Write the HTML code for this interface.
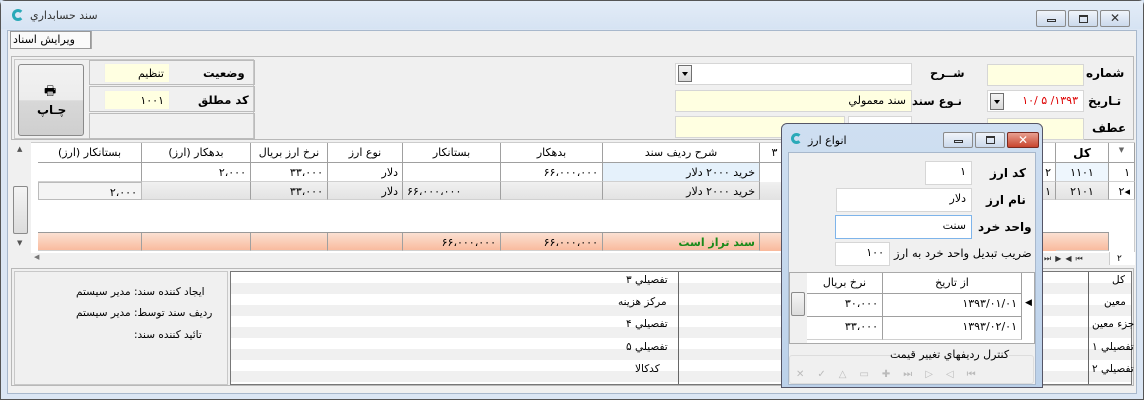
<!DOCTYPE html>
<html><head><meta charset="utf-8">
<style>
*{box-sizing:border-box;margin:0;padding:0}
body{width:1144px;height:400px;overflow:hidden;background:#cfdcec;font-family:"DejaVu Sans","Liberation Sans",sans-serif;font-size:11px;color:#000;position:relative}
.a{position:absolute}
.t{position:absolute;white-space:nowrap;direction:rtl}
.b{font-weight:bold}
.fld{position:absolute;background:#fff;border:1px solid #d6d6d6;direction:rtl;text-align:right;padding:3px 5px;white-space:nowrap}
.y{background:#ffffe1}
.c{position:absolute;border-right:1px solid #a0a0a0;border-bottom:1px solid #d0d0d0;text-align:right;padding:3px 4px;white-space:nowrap;direction:rtl;overflow:hidden}
.h{text-align:center;background:#fff;border-bottom:1px solid #a0a0a0}
.btn{position:absolute;border:1px solid #8a8a8a;border-radius:2px;background:linear-gradient(#f4f4f4,#dcdcdc);}
.dd{position:absolute;width:14px;height:17px;border:1px solid #707070;background:linear-gradient(#f4f4f4,#d8d8d8)}
.dd:after{content:"";position:absolute;left:3px;top:6px;border:3px solid transparent;border-top:4px solid #000}
</style></head><body>
<div class="a" style="left:0;top:0;width:1144px;height:400px;border:1px solid #555;border-radius:5px 5px 0 0;background:#dbe6f4"></div>
<div class="a" style="left:1px;top:1px;width:1142px;height:28px;background:linear-gradient(#e3ecf7,#d6e3f3)"></div>
<div class="a" style="left:12px;top:9px;width:12px;height:12px;border:3px solid #2aa9b8;border-right-color:transparent;border-radius:50%"></div>
<div class="t" style="left:30px;top:9px;color:#333">سند حسابداري</div>
<div class="btn" style="left:1036px;top:10px;width:30px;height:17px;background:linear-gradient(#f0f4fa,#cbd9ec)"><div class="a" style="left:10px;top:8px;width:9px;height:3px;border:1px solid #333"></div></div>
<div class="btn" style="left:1068px;top:10px;width:30px;height:17px;background:linear-gradient(#f0f4fa,#cbd9ec)"><div class="a" style="left:10px;top:4px;width:9px;height:8px;border:1px solid #333;border-top-width:2px"></div></div>
<div class="btn" style="left:1100px;top:10px;width:30px;height:17px;background:linear-gradient(#f0f4fa,#cbd9ec);text-align:center;font-size:12px;line-height:15px;color:#333">✕</div>
<div class="a" style="left:7px;top:30px;width:1130px;height:364px;background:#f0f0f0;border:1px solid #a8b8cc"></div>
<div class="a" style="left:10px;top:31px;width:81px;height:18px;border:1px solid #999;background:#fafafa"></div>
<div class="t" style="left:13px;top:33px">ویرایش اسناد</div>
<div class="a" style="left:91px;top:31px;width:1px;height:18px;background:#aaa"></div>
<div class="a" style="left:11px;top:56px;width:1123px;height:84px;border:1px solid #b8b8b8"></div>
<div class="a" style="left:14px;top:59px;width:240px;height:80px;border:1px solid #c8c8c8"></div>
<div class="btn" style="left:18px;top:64px;width:66px;height:72px;border-radius:3px;background:linear-gradient(#f2f2f2 0,#ececec 50%,#d8d8d8 51%,#cfcfcf)"></div>
<div class="t" style="left:44px;top:82px;font-size:13px">🖶</div>
<div class="t b" style="left:37px;top:103px;font-size:12px">چـاپ</div>
<div class="a" style="left:89px;top:60px;width:166px;height:25px;border:1px solid #bbb"></div>
<div class="a" style="left:89px;top:86px;width:166px;height:26px;border:1px solid #bbb"></div>
<div class="a" style="left:89px;top:113px;width:166px;height:26px;border:1px solid #bbb"></div>
<div class="fld y" style="left:104px;top:63px;width:66px;height:20px;border-color:#eee">تنظیم</div>
<div class="fld y" style="left:104px;top:90px;width:66px;height:20px;border-color:#eee">۱۰۰۱</div>
<div class="t b" style="left:203px;top:66px;font-size:11.5px">وضعیت</div>
<div class="t b" style="left:198px;top:93px;font-size:11.5px">کد مطلق</div>
<div class="fld" style="left:675px;top:63px;width:237px;height:22px"></div>
<div class="dd" style="left:678px;top:65px"></div>
<div class="fld y" style="left:675px;top:90px;width:237px;height:22px">سند معمولي</div>
<div class="fld y" style="left:675px;top:116px;width:170px;height:22px"></div>
<div class="fld" style="left:848px;top:116px;width:64px;height:22px"></div>
<div class="t b" style="left:930px;top:66px;font-size:11.5px">شــرح</div>
<div class="t b" style="left:912px;top:94px;font-size:11.5px">نـوع سند</div>
<div class="fld y" style="left:987px;top:64px;width:97px;height:22px"></div>
<div class="fld" style="left:987px;top:90px;width:97px;height:22px;color:#d00">۱۳۹۳/ ۵ /۱۰</div>
<div class="dd" style="left:990px;top:93px"></div>
<div class="fld y" style="left:987px;top:118px;width:97px;height:22px"></div>
<div class="t b" style="left:1086px;top:66px;font-size:12px">شماره</div>
<div class="t b" style="left:1088px;top:94px;font-size:12px">تـاریخ</div>
<div class="t b" style="left:1092px;top:121px;font-size:12px">عطف</div>
<div class="a" style="left:12px;top:142px;width:1123px;height:123px;background:#fff;border:1px solid #ccc"></div>
<div class="a" style="left:12px;top:142px;width:19px;height:111px;background:#f0f0f0"></div>
<div class="btn" style="left:13px;top:186px;width:15px;height:48px"></div>
<div class="t" style="left:17px;top:145px;font-size:7px;color:#555">▲</div>
<div class="t" style="left:17px;top:239px;font-size:7px;color:#555">▼</div>
<div class="a" style="left:12px;top:253px;width:1123px;height:12px;background:#f0f0f0"></div>
<div class="t" style="left:34px;top:253px;font-size:7px;color:#777">◀</div>
<div class="c h" style="left:38px;top:143px;width:104px;height:20px">بستانکار (ارز)</div>
<div class="c h" style="left:142px;top:143px;width:109px;height:20px">بدهکار (ارز)</div>
<div class="c h" style="left:251px;top:143px;width:77px;height:20px">نرخ ارز بریال</div>
<div class="c h" style="left:328px;top:143px;width:75px;height:20px">نوع ارز</div>
<div class="c h" style="left:403px;top:143px;width:98px;height:20px">بستانکار</div>
<div class="c h" style="left:501px;top:143px;width:102px;height:20px">بدهکار</div>
<div class="c h" style="left:603px;top:143px;width:157px;height:20px">شرح ردیف سند</div>
<div class="c h" style="left:760px;top:143px;width:30px;height:20px">۳</div>
<div class="c h" style="left:1040px;top:143px;width:16px;height:20px"></div>
<div class="c h b" style="left:1056px;top:143px;width:53px;height:20px;font-size:12px">کل</div>
<div class="c h" style="left:1109px;top:143px;width:26px;height:20px;font-size:7px;color:#666">▼</div>
<div class="c" style="left:38px;top:163px;width:104px;height:19px"></div>
<div class="c" style="left:142px;top:163px;width:109px;height:19px">۲،۰۰۰</div>
<div class="c" style="left:251px;top:163px;width:77px;height:19px">۳۳،۰۰۰</div>
<div class="c" style="left:328px;top:163px;width:75px;height:19px">دلار</div>
<div class="c" style="left:403px;top:163px;width:98px;height:19px"></div>
<div class="c" style="left:501px;top:163px;width:102px;height:19px">۶۶،۰۰۰،۰۰۰</div>
<div class="c" style="left:603px;top:163px;width:157px;height:19px;background:#e5f1fb">خرید ۲۰۰۰ دلار</div>
<div class="c" style="left:1040px;top:163px;width:16px;height:19px">۲</div>
<div class="c" style="left:1056px;top:163px;width:53px;height:19px;background:#eef6fd;text-align:center">۱۱۰۱</div>
<div class="c" style="left:1109px;top:163px;width:26px;height:19px">۱</div>
<div class="a" style="left:38px;top:182px;width:1097px;height:18px;background:linear-gradient(#f0f0f0,#e2e2e2)"></div>
<div class="c" style="left:38px;top:182px;width:104px;height:18px;background:#f4f4f4;border:1px solid #bbb">۲،۰۰۰</div>
<div class="c" style="left:142px;top:182px;width:109px;height:18px"></div>
<div class="c" style="left:251px;top:182px;width:77px;height:18px">۳۳،۰۰۰</div>
<div class="c" style="left:328px;top:182px;width:75px;height:18px">دلار</div>
<div class="c" style="left:403px;top:182px;width:98px;height:18px;text-align:left">۶۶،۰۰۰،۰۰۰</div>
<div class="c" style="left:501px;top:182px;width:102px;height:18px"></div>
<div class="c" style="left:603px;top:182px;width:157px;height:18px">خرید ۲۰۰۰ دلار</div>
<div class="c" style="left:1040px;top:182px;width:16px;height:18px">۱</div>
<div class="c" style="left:1056px;top:182px;width:53px;height:18px;text-align:center">۲۱۰۱</div>
<div class="c" style="left:1109px;top:182px;width:26px;height:18px;background:#fff">◂۲</div>
<div class="a" style="left:38px;top:232px;width:1071px;height:19px;background:linear-gradient(#fbe0d2,#f9b99b);border-top:1px solid #999"></div>
<div class="c" style="left:38px;top:233px;width:104px;height:18px"></div>
<div class="c" style="left:142px;top:233px;width:109px;height:18px"></div>
<div class="c" style="left:251px;top:233px;width:77px;height:18px"></div>
<div class="c" style="left:328px;top:233px;width:75px;height:18px"></div>
<div class="c" style="left:403px;top:233px;width:98px;height:18px">۶۶،۰۰۰،۰۰۰</div>
<div class="c" style="left:501px;top:233px;width:102px;height:18px">۶۶،۰۰۰،۰۰۰</div>
<div class="c b" style="left:603px;top:233px;width:157px;height:18px;color:#1a8a1a">سند تراز است</div>
<div class="c" style="left:1056px;top:233px;width:53px;height:18px"></div>
<div class="t" style="left:1044px;top:254px;font-size:8px;color:#333;letter-spacing:4px">⏮◀▶⏭</div>
<div class="a" style="left:1109px;top:252px;width:26px;height:13px;background:#fff;border-left:1px solid #ccc"></div>
<div class="t" style="left:1117px;top:254px;font-size:9px">۲</div>
<div class="a" style="left:11px;top:268px;width:1123px;height:118px;border:1px solid #b8b8b8"></div>
<div class="a" style="left:14px;top:271px;width:214px;height:114px;border:1px solid #c8c8c8"></div>
<div class="t" style="left:76px;top:286px;font-size:10.5px">ایجاد کننده سند: مدیر سیستم</div>
<div class="t" style="left:76px;top:307px;font-size:10.5px">ردیف سند توسط: مدیر سیستم</div>
<div class="t" style="left:134px;top:329px;font-size:10.5px">تائید کننده سند:</div>
<div class="a" style="left:230px;top:271px;width:902px;height:114px;background:repeating-linear-gradient(#fff 0,#fff 11px,#f0f0f0 11px,#f0f0f0 22px);border:1px solid #777"></div>
<div class="a" style="left:678px;top:272px;width:1px;height:112px;background:#666"></div>
<div class="t" style="left:626px;top:274px;font-size:10.5px">تفصیلي ۳</div>
<div class="t" style="left:618px;top:296px;font-size:10.5px">مرکز هزینه</div>
<div class="t" style="left:626px;top:318px;font-size:10.5px">تفصیلي ۴</div>
<div class="t" style="left:626px;top:341px;font-size:10.5px">تفصیلي ۵</div>
<div class="t" style="left:635px;top:363px;font-size:10.5px">کدکالا</div>
<div class="t" style="left:1112px;top:274px;font-size:10.5px">کل</div>
<div class="t" style="left:1104px;top:296px;font-size:10.5px">معین</div>
<div class="t" style="left:1092px;top:318px;font-size:10.5px">جزء معین</div>
<div class="t" style="left:1092px;top:341px;font-size:10.5px">تفصیلي ۱</div>
<div class="t" style="left:1092px;top:363px;font-size:10.5px">تفصیلي ۲</div>
<div class="a" style="left:1088px;top:272px;width:1px;height:112px;background:#666"></div>
<div class="a" style="left:781px;top:123px;width:262px;height:265px;background:linear-gradient(#cfdff1,#bcd1ea);border:1px solid #556;border-radius:6px 6px 0 0"></div>
<div class="a" style="left:791px;top:133px;width:11px;height:11px;border:3px solid #2aa9b8;border-right-color:transparent;border-radius:50%"></div>
<div class="t" style="left:808px;top:134px">انواع ارز</div>
<div class="btn" style="left:943px;top:132px;width:30px;height:16px;background:linear-gradient(#f0f4fa,#cbd9ec)"><div class="a" style="left:10px;top:7px;width:9px;height:3px;border:1px solid #333"></div></div>
<div class="btn" style="left:975px;top:132px;width:30px;height:16px;background:linear-gradient(#f0f4fa,#cbd9ec)"><div class="a" style="left:10px;top:3px;width:9px;height:8px;border:1px solid #333;border-top-width:2px"></div></div>
<div class="btn" style="left:1007px;top:132px;width:32px;height:16px;background:linear-gradient(#e8a090,#c8452e);border-color:#7a2a20;color:#fff;text-align:center;font-size:12px;line-height:14px;font-weight:bold">✕</div>
<div class="a" style="left:788px;top:152px;width:248px;height:233px;background:#f0f0f0;border:1px solid #a8b8cc"></div>
<div class="fld" style="left:925px;top:161px;width:47px;height:24px">۱</div>
<div class="fld" style="left:836px;top:188px;width:136px;height:24px">دلار</div>
<div class="fld" style="left:835px;top:215px;width:137px;height:24px;border-color:#7eb4ea">سنت</div>
<div class="fld" style="left:835px;top:242px;width:55px;height:24px">۱۰۰</div>
<div class="t b" style="left:990px;top:166px;font-size:12px">کد ارز</div>
<div class="t b" style="left:986px;top:193px;font-size:12px">نام ارز</div>
<div class="t b" style="left:978px;top:220px;font-size:12px">واحد خرد</div>
<div class="t" style="left:894px;top:246px;font-size:11.5px">ضریب تبدیل واحد خرد به ارز</div>
<div class="a" style="left:789px;top:272px;width:246px;height:72px;background:#fff;border:1px solid #aaa"></div>
<div class="a" style="left:790px;top:273px;width:17px;height:70px;background:#f0f0f0"></div>
<div class="btn" style="left:791px;top:292px;width:14px;height:24px"></div>
<div class="c h" style="left:807px;top:273px;width:76px;height:21px">نرخ بریال</div>
<div class="c h" style="left:883px;top:273px;width:139px;height:21px">از تاریخ</div>
<div class="c" style="left:807px;top:294px;width:76px;height:23px;border-bottom-color:#a0a0a0">۳۰،۰۰۰</div>
<div class="c" style="left:883px;top:294px;width:139px;height:23px;border-bottom-color:#a0a0a0">۱۳۹۳/۰۱/۰۱</div>
<div class="t" style="left:1025px;top:298px;font-size:9px">◀</div>
<div class="c" style="left:807px;top:317px;width:76px;height:23px">۳۳،۰۰۰</div>
<div class="c" style="left:883px;top:317px;width:139px;height:23px">۱۳۹۳/۰۲/۰۱</div>
<div class="a" style="left:789px;top:355px;width:245px;height:29px;border:1px solid #ddd;border-radius:3px"></div>
<div class="t" style="left:890px;top:348px;font-size:11px;background:#f0f0f0">کنترل ردیفهاي تغییر قیمت</div>
<div class="t" style="left:796px;top:369px;font-size:10px;color:#bbb;letter-spacing:13px">⏮◁▷⏭✚▭△✓✕</div>
</body></html>
